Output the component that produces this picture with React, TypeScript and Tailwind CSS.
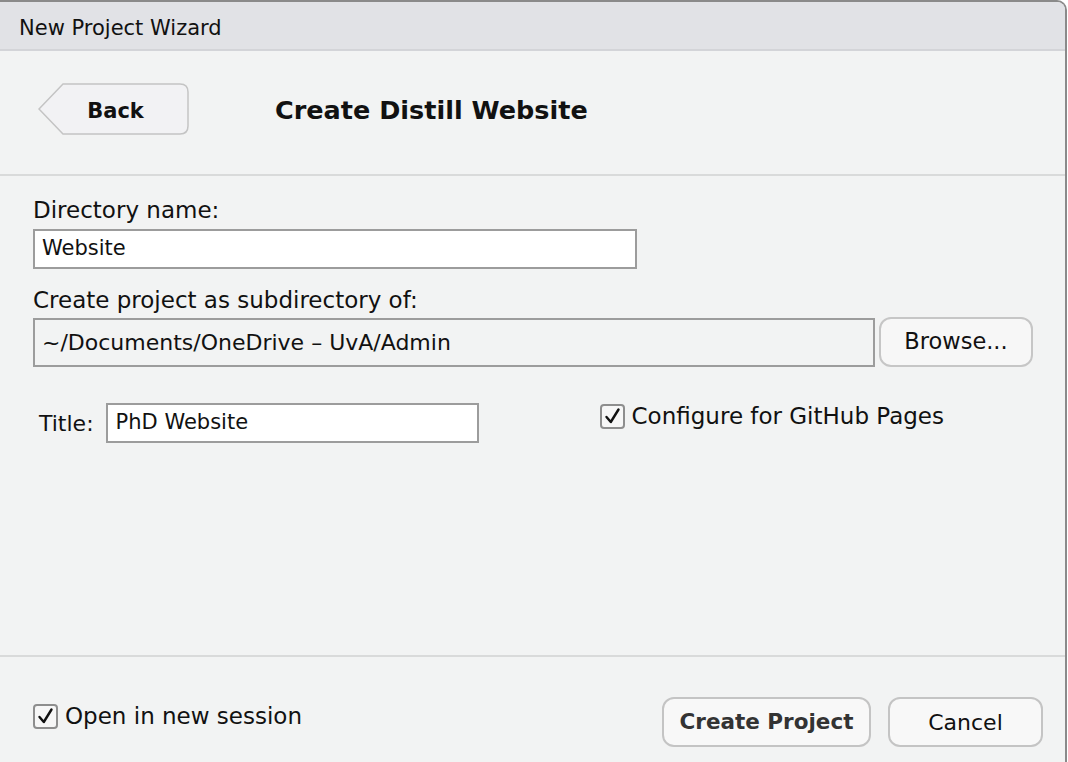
import React from 'react';

const font = { fontFamily: '"DejaVu Sans", "Liberation Sans", sans-serif' };

function CheckBox({ label, className = '' }: { label: string; className?: string }) {
  return (
    <label className={`flex items-center gap-[7px] text-[23px] leading-[26px] text-[#111] ${className}`}>
      <span className="flex h-[25px] w-[25px] shrink-0 items-center justify-center rounded-[4px] border-[2px] border-[#8e8e8e] bg-[#f7f7f7]">
        <svg width="19" height="19" viewBox="0 0 19 19" aria-hidden="true">
          <path d="M3.5 10 L7.8 15 L15.5 2.5" fill="none" stroke="#111" strokeWidth="2.4" strokeLinecap="round" strokeLinejoin="round" />
        </svg>
      </span>
      <span>{label}</span>
    </label>
  );
}

function BackButton() {
  return (
    <button className="relative flex h-[52px] w-[151px] shrink-0 items-center justify-center pl-[4px] pt-[5px] text-[21px] font-bold text-[#111]">
      <svg className="absolute inset-0" width="151" height="52" viewBox="0 0 151 52" aria-hidden="true">
        <path
          d="M25 1 L142 1 Q150 1 150 9 L150 43 Q150 51 142 51 L25 51 L1 26 Z"
          fill="#f2f2f4"
          stroke="#c4c4c4"
          strokeWidth="1.5"
        />
      </svg>
      <span className="relative">Back</span>
    </button>
  );
}

export default function App() {
  return (
    <div className="h-[762px] w-[1068px] bg-white" style={font}>
      <div className="flex h-full w-[1067px] flex-col overflow-hidden rounded-tr-[10px] border-t-2 border-r-2 border-[#8a8a8a] bg-[#f2f3f3]">
        <div className="flex h-[49px] shrink-0 items-center border-b-2 border-[#d3d4d8] bg-[#e1e2e6] pl-[19px] pt-[7px] text-[21px] text-[#111]">
          New Project Wizard
        </div>

        <div className="h-[125px] shrink-0 border-b-2 border-[#d9dada] pl-[38px] pt-[32px]">
          <div className="flex items-center">
            <BackButton />
            <h1 className="ml-[86px] mt-[2px] text-[25.5px] font-bold text-[#111]">Create Distill Website</h1>
          </div>
        </div>

        <div className="flex h-[481px] shrink-0 flex-col border-b-2 border-[#d9dada] pl-[33px] pt-[20px] text-[21px] text-[#111]">
          <div className="text-[23px] leading-[28px]">Directory name:</div>
          <div className="mt-[5px] flex h-[40px] w-[604px] items-center border-2 border-[#9c9c9c] bg-white px-[7px]">
            Website
          </div>

          <div className="mt-[17px] text-[23px] leading-[28px]">Create project as subdirectory of:</div>
          <div className="mt-[3px] flex items-end gap-[4px]">
            <div className="flex h-[49px] w-[842px] items-center border-2 border-[#9c9c9c] bg-[#f2f3f3] px-[7px] text-[22px]">
              ~/Documents/OneDrive – UvA/Admin
            </div>
            <button className="h-[50px] w-[154px] rounded-[12px] border-2 border-[#c6c6c6] bg-[#f7f7f7] text-[22.5px] text-[#111]">
              Browse...
            </button>
          </div>

          <div className="mt-[36px] flex items-start">
            <div className="flex items-center">
              <span className="ml-[6px] mr-[12px] text-[22px]">Title:</span>
              <div className="flex h-[40px] w-[373px] items-center border-2 border-[#9c9c9c] bg-white px-[8px]">
                PhD Website
              </div>
            </div>
            <CheckBox label="Configure for GitHub Pages" className="ml-[121px]" />
          </div>
        </div>

        <div className="flex flex-1 items-start justify-between pl-[33px] pr-[22px] pt-[40px]">
          <CheckBox label="Open in new session" className="mt-[6px]" />
          <div className="flex gap-[17px]">
            <button className="h-[50px] w-[209px] rounded-[12px] border-2 border-[#c4c4c4] bg-[#f8f8f8] text-[21.5px] font-bold text-[#333]">
              Create Project
            </button>
            <button className="h-[50px] w-[155px] rounded-[12px] border-2 border-[#c4c4c4] bg-[#f8f8f8] text-[22px] text-[#111]">
              Cancel
            </button>
          </div>
        </div>
      </div>
    </div>
  );
}
